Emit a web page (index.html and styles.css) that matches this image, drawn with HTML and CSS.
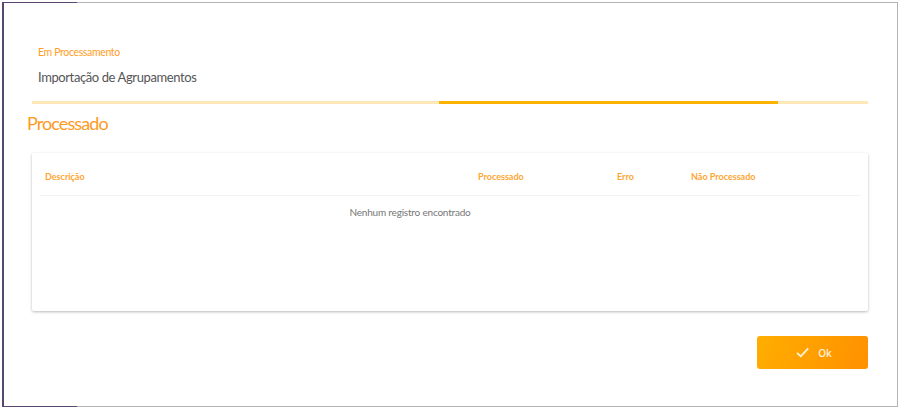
FILE: index.html
```html
<!DOCTYPE html>
<html lang="pt">
<head>
<meta charset="utf-8">
<link rel="stylesheet" href="styles.css">
</head>
<body>
<div class="frame">
  <div class="dialog">
    <div class="head">
      <div class="status">Em Processamento</div>
      <div class="title">Importação de Agrupamentos</div>
    </div>
    <div class="progress"><div class="progress-fill"></div></div>
    <h2 class="section">Processado</h2>
    <div class="card">
      <div class="thead">
        <div class="col c1">Descrição</div>
        <div class="col c2">Processado</div>
        <div class="col c3">Erro</div>
        <div class="col c4">Não Processado</div>
      </div>
      <div class="empty">Nenhum registro encontrado</div>
    </div>
    <div class="actions">
      <button class="btn-ok">
        <svg width="13" height="11" viewBox="0 0 13 11"><path d="M1 5.8 L4.8 9.3 L12.2 1.4" fill="none" stroke="#fff6e0" stroke-width="1.8"/></svg>
        <span>Ok</span>
      </button>
    </div>
  </div>
</div>
</body>
</html>
```
FILE: styles.css
```css
* { box-sizing: border-box; }
html, body { margin: 0; padding: 0; background: #fff; }
body { width: 900px; height: 409px; font-family: "Lato", sans-serif; }
.frame {
  padding: 2px;
  height: 409px;
}
.dialog {
  height: 405px;
  border: 1px solid #b4b4b4;
  border-left: 2px solid #5b4672;
  background: #fff;
  position: relative;
  padding: 0 29px 0 21px;
}
.dialog::before, .dialog::after {
  content: "";
  position: absolute;
  left: -2px;
  width: 75px;
  height: 1px;
  background: #5b4672;
}
.dialog::before { top: -1px; }
.dialog::after { bottom: -1px; }
.head { padding: 42px 0 0 13px; }
.status {
  color: #ff9d1e;
  font-size: 10.5px;
  letter-spacing: -0.35px;
  line-height: 14px;
}
.title {
  color: #555;
  font-size: 13px;
  letter-spacing: -0.4px;
  line-height: 18px;
  margin-top: 9px;
}
.progress {
  margin: 15px 0 0 7px;
  height: 3px;
  background: #fde9b8;
  position: relative;
}
.progress-fill {
  position: absolute;
  left: 407px;
  width: 339px;
  top: 0;
  bottom: 0;
  background: #ffb300;
}
.section {
  margin: 7px 0 0 2px;
  font-weight: 400;
  color: #ff9a1f;
  font-size: 18px;
  letter-spacing: -0.9px;
  line-height: 24px;
}
.card {
  margin: 18px 0 0 7px;
  height: 158px;
  background: #fff;
  box-shadow: 0 1px 3px rgba(0,0,0,0.28);
  border-radius: 2px;
  padding: 0 8px;
}
.thead {
  display: grid;
  grid-template-columns: 433px 139px 74px 1fr;
  height: 43px;
  align-items: center;
  border-bottom: 1px solid #f3f3f3;
  padding-left: 5px;
  padding-top: 4px;
}
.col {
  color: #ffa533;
  font-size: 9px;
  font-weight: 700;
  letter-spacing: 0;
}
.empty {
  text-align: center;
  color: #777;
  font-size: 10px;
  letter-spacing: -0.2px;
  margin-top: 10px;
  padding-right: 80px;
}
.actions {
  display: flex;
  justify-content: flex-end;
  margin-top: 25px;
}
.btn-ok {
  width: 111px;
  height: 33px;
  border: 0;
  border-radius: 3px;
  background: linear-gradient(110deg, #ffae00, #ff9000);
  display: flex;
  align-items: center;
  justify-content: center;
  gap: 9px;
  color: #fff3dc;
  font-family: "Open Sans", sans-serif;
  font-size: 10px;
  font-weight: 600;
  padding: 0 0 0 3px;
}
```
